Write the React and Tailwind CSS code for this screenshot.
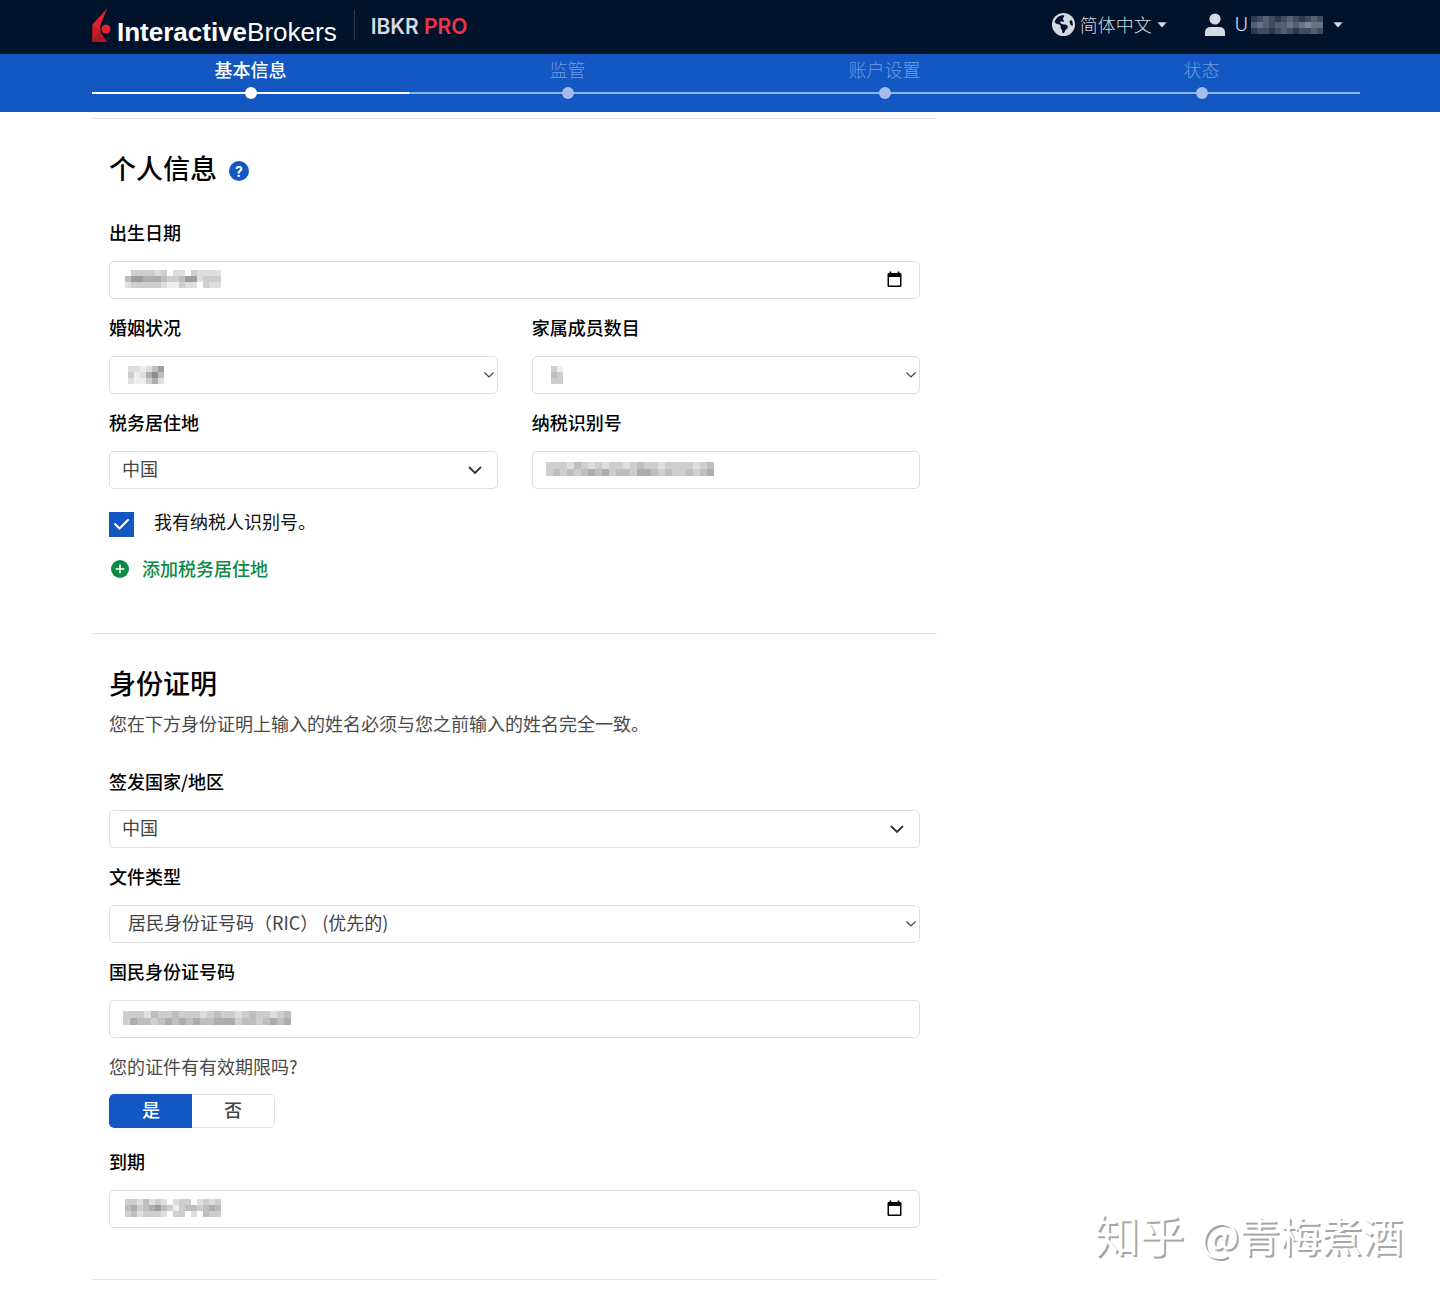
import { useState } from 'react';
import { FaEarthAmericas } from 'react-icons/fa6';

const STEPS = ['基本信息', '监管', '账户设置', '状态'];

// Each digit is a grey level, 0 is fully transparent and 9 is the darkest.
const MASKS = {
  birth: ['0333323022032222', '4665554334662333', '2333332113220322'],
  marital: ['221246', '312574', '211352'],
  family: ['31', '43', '33'],
  taxId: ['333243232332343323333234', '343434545344355434334345'],
  nationalId: ['333243343332343323433234', '354434545454455534434545'],
  expiry: ['3324232023302323', '4534564313443454', '3423332033020433'],
  account: ['234323432343', '454344545655', '233234323343'],
};

function Mosaic({ rows, size = 6, color = '#5c5c5c', className = '' }) {
  return (
    <svg
      className={`pointer-events-none ${className}`}
      width={rows[0].length * size}
      height={rows.length * size}
      shapeRendering="crispEdges"
      aria-hidden="true"
    >
      {rows.map((row, y) =>
        [...row].map((level, x) => (
          <rect
            key={`${x}-${y}`}
            x={x * size}
            y={y * size}
            width={size}
            height={size}
            fill={color}
            opacity={Number(level) / 10}
          />
        )),
      )}
    </svg>
  );
}

function LogoMark() {
  return (
    <svg width="20" height="35" viewBox="0 0 20 35" aria-hidden="true">
      <path d="M15.5 0L0.5 16.5V34L8.5 22L8 18Z" fill="#e3212f" />
      <path d="M0.5 16.5V34L8.5 22Z" fill="#c91d2b" />
      <path d="M0.5 34L8.5 22L9 25L15.5 34Z" fill="#b01722" />
      <circle cx="14" cy="21" r="4.5" fill="#e8222f" />
    </svg>
  );
}

function Caret() {
  return (
    <svg width="10" height="6" viewBox="0 0 10 6" aria-hidden="true">
      <path d="M0.5 0.3H9.5L5 5.6Z" fill="currentColor" />
    </svg>
  );
}

function CalendarIcon() {
  return (
    <svg width="15" height="17" viewBox="0 0 15 17" aria-hidden="true">
      <path
        fillRule="evenodd"
        d="M2.6 0.5H4.3V2H10.7V0.5H12.4V2H13.2Q14.5 2 14.5 3.3V14.7Q14.5 16 13.2 16H1.8Q0.5 16 0.5 14.7V3.3Q0.5 2 1.8 2H2.6ZM2 6V14.5H13V6Z"
        fill="#000"
      />
    </svg>
  );
}

function Chevron({ large }) {
  return large ? (
    <svg width="14" height="9" viewBox="0 0 14 9" fill="none" aria-hidden="true">
      <path d="M1.5 1.5L7 7L12.5 1.5" stroke="#333" strokeWidth="1.8" strokeLinecap="round" />
    </svg>
  ) : (
    <svg width="10" height="6" viewBox="0 0 10 6" fill="none" aria-hidden="true">
      <path d="M0.5 0.5L5 5L9.5 0.5" stroke="#444" strokeWidth="1.2" />
    </svg>
  );
}

function Field({ id, label, children }) {
  return (
    <div>
      <label htmlFor={id} className="mb-4 block leading-[26px] font-medium text-black">
        {label}
      </label>
      <div className="relative">{children}</div>
    </div>
  );
}

const boxClass = 'h-[38px] w-full rounded-[5px] border border-[#dedede] bg-white text-[#444]';

function SelectField({ id, label, options, large, mask }) {
  return (
    <Field id={id} label={label}>
      <select
        id={id}
        className={`${boxClass} appearance-none pr-8 pb-[3px] ${large ? 'pl-3' : 'pl-[18px]'}`}
      >
        {options.map((o) => (
          <option key={o}>{o}</option>
        ))}
      </select>
      {mask && <Mosaic rows={mask} className="absolute top-[10px] left-[19px]" />}
      <span
        className={`pointer-events-none absolute inset-y-0 flex items-center ${large ? 'right-4' : 'right-1'}`}
      >
        <Chevron large={large} />
      </span>
    </Field>
  );
}

function DateField({ id, label, mask }) {
  return (
    <Field id={id} label={label}>
      <input
        id={id}
        type="date"
        className={`${boxClass} px-4 [&::-webkit-calendar-picker-indicator]:opacity-0 [&::-webkit-datetime-edit]:opacity-0`}
      />
      <Mosaic rows={mask} className="absolute top-[9px] left-4" />
      <span className="pointer-events-none absolute inset-y-0 right-[18px] flex items-center pb-[2px]">
        <CalendarIcon />
      </span>
    </Field>
  );
}

function TextField({ id, label, mask }) {
  return (
    <Field id={id} label={label}>
      <input id={id} type="text" className={`${boxClass} px-[14px]`} />
      <Mosaic rows={mask} size={7} className="absolute top-[11px] left-[14px]" />
    </Field>
  );
}

function Header() {
  return (
    <header className="flex h-[54px] items-center bg-[#01122b] pr-[97px] pl-[92px] text-[#d5d9e2]">
      <a href="#home" className="flex items-center gap-[5px] text-white">
        <span className="pb-1">
          <LogoMark />
        </span>
        <span className="pt-[10px] font-['Liberation_Sans',sans-serif] text-[26px] leading-7">
          <b>Interactive</b>Brokers
        </span>
      </a>
      <span className="mb-1 ml-[17px] h-[30px] w-px bg-[#26364d]" />
      <span className="ml-4 font-[Inter,sans-serif] text-[21px] font-semibold">
        IBKR <span className="text-[#f0344b]">PRO</span>
      </span>
      <div className="ml-auto flex items-center gap-[38px] pb-[5px]">
        <button type="button" className="flex items-center gap-[5px] font-light">
          <FaEarthAmericas size={23} />
          简体中文
          <Caret />
        </button>
        <button type="button" className="flex items-center gap-[10px]" aria-label="账户">
          <svg width="20" height="24" viewBox="0 0 20 24" fill="currentColor" aria-hidden="true">
            <circle cx="10" cy="6" r="5.6" />
            <path d="M0 23V19.5Q0 14 6 14H14Q20 14 20 19.5V23Z" />
          </svg>
          <span className="flex items-center gap-[3px]">
            <span className="font-[Inter,sans-serif] font-light">U</span>
            <Mosaic rows={MASKS.account} color="#cfd5df" />
          </span>
          <Caret />
        </button>
      </div>
    </header>
  );
}

function Stepper() {
  return (
    <ol className="grid h-[58px] grid-cols-4 bg-[#1257c2] pt-[3px] pr-20 pl-[92px]">
      {STEPS.map((step, i) => (
        <li key={step} aria-current={i === 0 ? 'step' : undefined}>
          <div
            className={`text-center leading-6 ${i === 0 ? 'font-medium text-white' : 'font-light text-[#719be0]'}`}
          >
            {step}
          </div>
          <div className="mt-[5px] grid h-[14px] items-center justify-items-center">
            <span
              className={`col-start-1 row-start-1 h-0.5 w-full ${i === 0 ? 'bg-white' : 'bg-[#8fb2ea]'}`}
            />
            <span
              className={`col-start-1 row-start-1 size-3 rounded-full ${i === 0 ? 'bg-white' : 'bg-[#a6bdeb]'}`}
            />
          </div>
        </li>
      ))}
    </ol>
  );
}

export default function App() {
  const [hasTaxId, setHasTaxId] = useState(true);
  const [expires, setExpires] = useState(true);

  return (
    <div className="relative min-h-screen bg-white font-['Noto_Sans_CJK_SC',sans-serif] text-[18px]">
      <Header />
      <Stepper />

      <main className="pt-[6px] pr-20 pb-[15px] pl-[92px]">
        <div className="w-2/3">
          <section className="border-t border-[#e3e3e3] px-[17px] pt-[30px] pb-[50px]">
            <div className="flex items-center gap-3">
              <h2 className="pb-[2px] text-[27px] leading-[38px] font-medium text-black">个人信息</h2>
              <button
                type="button"
                aria-label="帮助"
                className="mt-1 flex size-5 items-center justify-center rounded-full bg-[#1257c2] font-[Inter,sans-serif] text-[14px] font-bold text-white"
              >
                ?
              </button>
            </div>

            <div className="mt-[30px] flex flex-col gap-[15px]">
              <DateField id="birth" label="出生日期" mask={MASKS.birth} />
              <div className="grid grid-cols-2 gap-x-[34px] gap-y-[15px]">
                <SelectField id="marital" label="婚姻状况" options={['']} mask={MASKS.marital} />
                <SelectField id="family" label="家属成员数目" options={['']} mask={MASKS.family} />
                <SelectField id="tax-country" label="税务居住地" options={['中国']} large />
                <TextField id="tax-id" label="纳税识别号" mask={MASKS.taxId} />
              </div>
            </div>

            <label className="mt-[23px] flex h-[25px] items-center gap-5 text-[#111]">
              <span className="grid size-[25px] place-items-center">
                <input
                  type="checkbox"
                  checked={hasTaxId}
                  onChange={(e) => setHasTaxId(e.target.checked)}
                  className="col-start-1 row-start-1 size-[25px] appearance-none border border-[#1257c2] checked:bg-[#1257c2]"
                />
                <svg
                  className="pointer-events-none col-start-1 row-start-1"
                  width="15"
                  height="11"
                  viewBox="0 0 15 11"
                  fill="none"
                  aria-hidden="true"
                >
                  <path d="M1 5L5.5 9.5L14 1" stroke="#fff" strokeWidth="2" strokeLinecap="round" />
                </svg>
              </span>
              <span className="pb-[7px]">我有纳税人识别号。</span>
            </label>

            <button
              type="button"
              className="mt-[18px] flex h-7 items-center gap-[13px] pl-[2px] font-medium text-[#0b8a43]"
            >
              <svg width="18" height="18" viewBox="0 0 18 18" aria-hidden="true">
                <circle cx="9" cy="9" r="9" fill="#0b8a43" />
                <path d="M9 5.2V12.8M5.2 9H12.8" stroke="#fff" strokeWidth="1.6" strokeLinecap="round" />
              </svg>
              <span className="pb-[2px]">添加税务居住地</span>
            </button>
          </section>

          <section className="border-y border-[#e3e3e3] px-[17px] pt-[30px] pb-[51px]">
            <h2 className="pb-[2px] text-[27px] leading-[38px] font-medium text-black">身份证明</h2>
            <p className="mt-[6px] mb-8 leading-[26px] text-[#4a4a4a]">
              您在下方身份证明上输入的姓名必须与您之前输入的姓名完全一致。
            </p>

            <div className="flex flex-col gap-[15px]">
              <SelectField id="issuer" label="签发国家/地区" options={['中国']} large />
              <SelectField
                id="doc-type"
                label="文件类型"
                options={['居民身份证号码（RIC） (优先的)']}
              />
              <TextField id="national-id" label="国民身份证号码" mask={MASKS.nationalId} />
            </div>

            <p className="mt-[15px] leading-[26px] text-[#4a4a4a]">您的证件有有效期限吗?</p>
            <div className="mt-[15px] mb-5 flex h-[34px] w-[166px] overflow-hidden rounded-[5px] font-medium">
              <button
                type="button"
                aria-pressed={expires}
                onClick={() => setExpires(true)}
                className={`flex-1 rounded-l-[5px] border border-r-0 pb-1 ${expires ? 'border-[#1257c2] bg-[#1257c2] text-white' : 'border-[#dedede] text-[#444]'}`}
              >
                是
              </button>
              <button
                type="button"
                aria-pressed={!expires}
                onClick={() => setExpires(false)}
                className={`flex-1 rounded-r-[5px] border border-l-0 pb-1 ${expires ? 'border-[#dedede] text-[#444]' : 'border-[#1257c2] bg-[#1257c2] text-white'}`}
              >
                否
              </button>
            </div>

            <DateField id="expiry" label="到期" mask={MASKS.expiry} />
          </section>
        </div>
      </main>

      <div className="pointer-events-none absolute right-[37px] bottom-[39px] flex items-center gap-4 text-[41px] leading-[44px] text-white [text-shadow:2px_2px_0_#a6a6a6]">
        <span className="text-[45px]">知乎</span>
        <span>@青梅煮酒</span>
      </div>
    </div>
  );
}
